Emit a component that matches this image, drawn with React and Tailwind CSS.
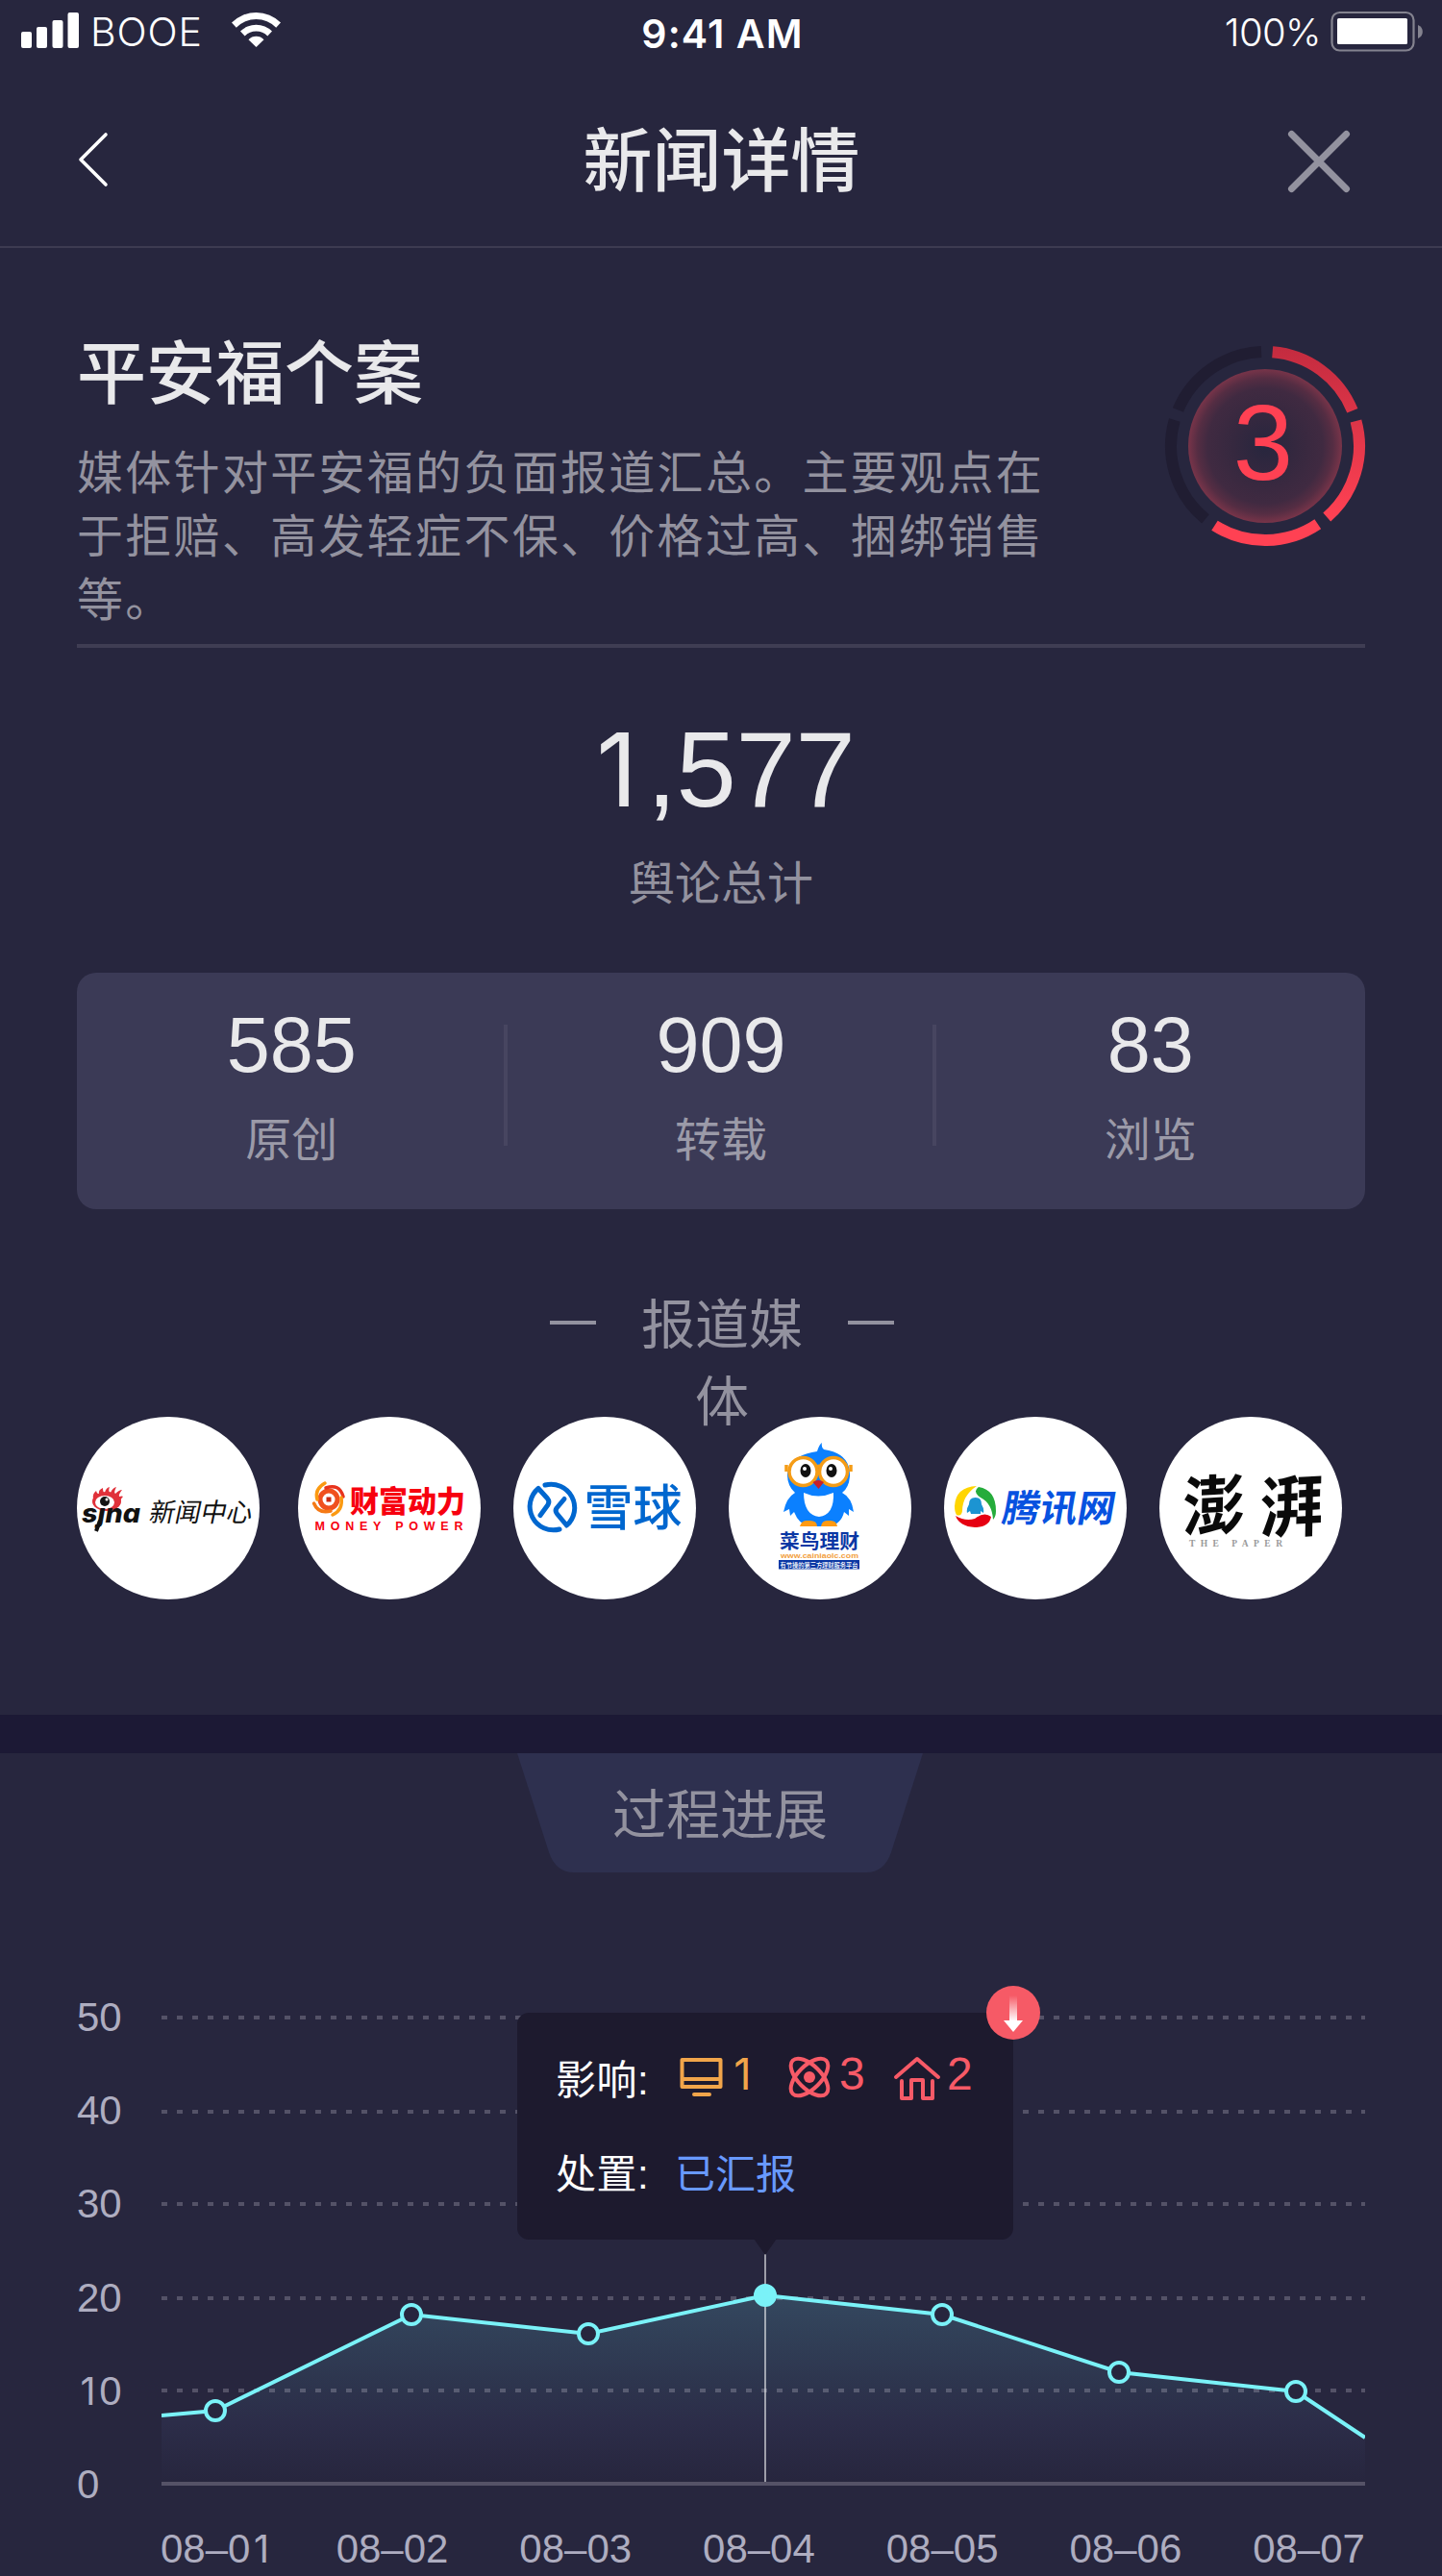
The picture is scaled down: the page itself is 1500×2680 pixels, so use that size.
import React from "react";

const SANS = "font-['Liberation_Sans','Noto_Sans_CJK_SC',sans-serif]";

// Sets "1" in a face without a foot serif, keeping the tabular digit width.
function Digits({ value }) {
  return [...value].map((c, i) =>
    c === "1" ? (
      <span key={i} className="inline-block w-[0.59em] text-center font-['Inter',sans-serif] text-[0.94em] leading-none">
        1
      </span>
    ) : (
      c
    )
  );
}

function StatusBar() {
  return (
    <div className="flex h-[66px] w-full items-start justify-between pl-[22px] pr-[19px] font-['Inter',sans-serif] text-white">
      <div className="flex w-[500px] items-start">
        <svg className="mt-[13px] h-[37px] w-[60px]" viewBox="0 0 60 37" fill="#fff">
          <rect x="0" y="20" width="11" height="17" rx="2" />
          <rect x="16" y="15" width="11" height="22" rx="2" />
          <rect x="32.5" y="8" width="11" height="29" rx="2" />
          <rect x="48.5" y="0" width="11.5" height="37" rx="2" />
        </svg>
        <span className="ml-3 mt-[9px] w-[118px] whitespace-nowrap text-[41px] font-light leading-[48px] tracking-[0.9px]">BOOE</span>
        <svg className="ml-[29px] mt-[13px] h-[36px] w-[51px]" viewBox="0 0 51 36" fill="#fff">
          <path d="M0 10.600 A36 36 0 0 1 51 10.600 L46.200 15.800 A29 29 0 0 0 4.800 15.800 Z" />
          <path d="M9 19.500 A23.300 23.300 0 0 1 42 19.500 L37.300 24.500 A16.500 16.500 0 0 0 13.700 24.500 Z" />
          <path d="M17.500 28.300 A11 11 0 0 1 33.500 28.300 L25.500 36 Z" />
        </svg>
      </div>
      <span className="mt-[11px] whitespace-nowrap text-[41px] font-semibold leading-[48px] tracking-[1.100px]">9:41 AM</span>
      <div className="flex w-[500px] items-start justify-end">
        <span className="mt-[10px] whitespace-nowrap text-[40px] font-light leading-[48px] tracking-[-0.6px]">100%</span>
        <svg className="ml-[10px] mt-[11px] h-[43px] w-[97px]" viewBox="0 0 97 43">
          <rect x="1.500" y="2" width="85" height="39.500" rx="8" fill="none" stroke="#84838f" strokeWidth="2.200" />
          <rect x="7" y="8" width="73" height="27" rx="1.500" fill="#fff" />
          <path d="M91 15 A7.500 7.500 0 0 1 91 29 Z" fill="#84838f" />
        </svg>
      </div>
    </div>
  );
}

function Header() {
  return (
    <div className="flex h-[192px] items-center justify-between border-b-2 border-[#3d3b51] pl-[80px] pr-[94px]">
      <svg className="mt-[10px] h-[60px] w-[36px]" viewBox="0 0 36 60" fill="none" stroke="#fff" strokeWidth="3.600" strokeLinecap="round" strokeLinejoin="round">
        <path d="M30 4 L4 30 L30 56" />
      </svg>
      <h1 className="ml-[47px] mt-[14px] text-[72px] font-medium leading-[84px] text-[#e9e9eb]">新闻详情</h1>
      <svg className="mt-[14px] h-[68px] w-[68px]" viewBox="0 0 68 68" fill="none" stroke="#93929f" strokeWidth="7" strokeLinecap="round">
        <path d="M5.500 5.500 L62.500 62.500 M62.500 5.500 L5.500 62.500" />
      </svg>
    </div>
  );
}

const SEGMENTS = [
  [4.5, 68, true],
  [74.6, 139, true],
  [146, 212.4, true],
  [219.3, 286, false],
  [292.5, 357.7, false],
];

function arc(from, to) {
  const at = (d) => {
    const a = ((d - 90) * Math.PI) / 180;
    return `${(105 + 98 * Math.cos(a)).toFixed(2)} ${(105 + 98 * Math.sin(a)).toFixed(2)}`;
  };
  return `M${at(from)} A98 98 0 0 1 ${at(to)}`;
}

function LevelRing() {
  return (
    <div className="relative h-[210px] w-[210px]">
      <svg className="block h-[210px] w-[210px]" viewBox="0 0 210 210" fill="none">
        <defs>
          <linearGradient id="ring" gradientUnits="userSpaceOnUse" x1="0" y1="0" x2="0" y2="180">
            <stop offset="0" stopColor="#c32b3f" />
            <stop offset="1" stopColor="#ff4153" />
          </linearGradient>
          <radialGradient id="core">
            <stop offset="0" stopColor="#27263e" />
            <stop offset="0.400" stopColor="#35283f" />
            <stop offset="0.750" stopColor="#402a41" />
            <stop offset="0.880" stopColor="#552d43" />
            <stop offset="1" stopColor="#783449" />
          </radialGradient>
        </defs>
        {SEGMENTS.map(([a, b, on]) => (
          <path key={a} d={arc(a, b)} stroke={on ? "url(#ring)" : "#201d32"} strokeWidth="12" />
        ))}
        <circle cx="105" cy="105" r="80" fill="url(#core)" />
      </svg>
      <span className="absolute inset-x-0 top-[38px] pr-1 text-center text-[112px] leading-[128px] text-[#ff4153]">3</span>
    </div>
  );
}

function Summary() {
  return (
    <section className="mx-[80px] flex h-[416px] items-start justify-between border-b-4 border-[#3f3d53]">
      <div className="w-[1020px]">
        <h2 className="mt-[89px] text-[72px] font-medium leading-[84px] text-[#e9e9eb]">平安福个案</h2>
        <p className="mt-[29px] text-[48px] leading-[66px] tracking-[2.300px] text-[#93929f]">
          媒体针对平安福的负面报道汇总。主要观点在
          <br />
          于拒赔、高发轻症不保、价格过高、捆绑销售
          <br />
          等。
        </p>
      </div>
      <div className="-mr-[1px] mt-[101px]">
        <LevelRing />
      </div>
    </section>
  );
}

function Totals() {
  const items = [
    ["585", "原创"],
    ["909", "转载"],
    ["83", "浏览"],
  ];
  return (
    <section className="flex flex-col items-center">
      <div className="mt-[63px] h-[128px] text-[112px] leading-[128px] tracking-[-0.3px] text-[#e9e9eb]">
        <Digits value="1,577" />
      </div>
      <div className="mt-[23px] text-[48px] leading-[64px] text-[#93929f]">舆论总计</div>
      <div className="mt-[60px] flex h-[246px] w-[1340px] items-start rounded-[20px] bg-[#3b3a56]">
        {items.map(([n, label], i) => (
          <React.Fragment key={n}>
            {i > 0 && <div className="-ml-[3px] -mr-px mt-[54px] h-[126px] w-1 bg-[#474560]" />}
            <div className="flex h-full flex-1 flex-col items-center">
              <div className="mt-[29px] text-[81px] leading-[92px] text-[#e9e9eb]">{n}</div>
              <div className="mt-[22px] text-[48px] leading-[64px] text-[#9b9aa8]">{label}</div>
            </div>
          </React.Fragment>
        ))}
      </div>
    </section>
  );
}

const CJK = "'Noto Sans CJK SC', sans-serif";

function Sina() {
  return (
    <g>
      <g fill="#e0313a">
        <ellipse cx="31" cy="88" rx="15" ry="10" />
        <path d="M17 85 Q16 80 20 77 Q21 81 23 80 Q22 76 27 74 Q27 79 29 79 Q30 74 34 73 Q32 78 35 79 Q37 74 41 73 Q38 79 40 80 Q44 76 47 76 Q43 81 44 83 Q47 82 48 83 Q44 87 45 91Z" />
      </g>
      <ellipse cx="29" cy="89" rx="10" ry="7" fill="#fff" />
      <circle cx="29" cy="88" r="5" fill="#141414" />
      <circle cx="31" cy="86" r="1.500" fill="#fff" />
      <text x="5" y="110" fontFamily="'Inter', sans-serif" fontStyle="italic" fontWeight="800" fontSize="27" textLength="61" lengthAdjust="spacingAndGlyphs" fill="#111">sȷna</text>
      <path d="M24 108 L20 119" stroke="#111" strokeWidth="4" />
      <text transform="translate(74 108.500) skewX(-12)" fontFamily={CJK} fontSize="27" textLength="107" lengthAdjust="spacingAndGlyphs" fill="#111">新闻中心</text>
    </g>
  );
}

function MoneyPower() {
  return (
    <g>
      <g fill="none" strokeLinecap="round">
        <circle cx="32" cy="86" r="9" stroke="#f0501e" strokeWidth="5" />
        <path d="M20 86 Q17 75 28 69" stroke="#fb9a12" strokeWidth="3.500" />
        <path d="M29 74 Q43 69 47 83" stroke="#e8331d" strokeWidth="3.500" />
        <path d="M45 84 Q47 97 36 102" stroke="#fb9a12" strokeWidth="3.500" />
        <path d="M34 98 Q21 101 16.500 90" stroke="#f57a16" strokeWidth="3.500" />
      </g>
      <rect x="29.500" y="83.500" width="5" height="5" fill="#c92a14" />
      <text x="54" y="99" fontFamily={CJK} fontWeight="900" fontSize="31" textLength="120" lengthAdjust="spacingAndGlyphs" fill="#f7000f">财富动力</text>
      <text x="17.500" y="118" fontFamily="'Liberation Sans', sans-serif" fontWeight="700" fontSize="12.500" textLength="154" fill="#f7000f">MONEY POWER</text>
    </g>
  );
}

function Snowball() {
  return (
    <g>
      <g fill="none" stroke="#0067cf" strokeWidth="5" strokeLinecap="round" strokeLinejoin="round">
        <path d="M33 71 A24.500 24.500 0 0 1 55.500 113 L45.500 101 Q43 98 45 95 L53 85.500" />
        <path d="M48 117 A24.500 24.500 0 0 1 26 74.500 L35.500 85 Q38 88 36 91.500 L28 102.500" />
      </g>
      <text x="73.500" y="113" fontFamily={CJK} fontWeight="500" fontSize="51" textLength="102" lengthAdjust="spacingAndGlyphs" fill="#0067cf">雪球</text>
    </g>
  );
}

function Cainiao() {
  return (
    <g>
      <path d="M92 36 Q94 29 97 27 Q96 32 99 34 Q127 38 126 62 Q125 74 118 79 Q128 84 130 99 L125 96 L125 103 L120 99 Q117 112 104 114 L84 114 Q73 112 68 99 L64 103 L63 96 L57 99 Q60 84 69 79 Q61 72 61 60 Q63 40 92 36Z" fill="#0b80ff" />
      <path d="M78 79 Q93 86 109 79 Q110 102 94 104 Q78 102 78 79Z" fill="#fff" />
      <g fill="#fff" stroke="#f59c16" strokeWidth="3.500">
        <circle cx="77.500" cy="57" r="14.500" />
        <circle cx="109" cy="57" r="14.500" />
      </g>
      <path d="M91 52.500 Q93.500 50 96 52.500 M60 50 v7 M127 50 v7" stroke="#f59c16" strokeWidth="3.500" fill="none" />
      <ellipse cx="80" cy="56" rx="5.500" ry="7" fill="#111" />
      <ellipse cx="107" cy="56" rx="5.500" ry="7" fill="#111" />
      <circle cx="79" cy="54" r="2" fill="#fff" />
      <circle cx="106" cy="54" r="2" fill="#fff" />
      <path d="M87.500 68 Q93 64 99 68 L93.500 75Z" fill="#c8202a" />
      <path d="M74 114 Q76 107 82 108 Q92 107 92 114Z M96 114 Q97 107 104 108 Q112 107 113 114Z" fill="#ff9a12" />
      <text x="53" y="137" fontFamily={CJK} fontWeight="700" fontSize="20" textLength="83" lengthAdjust="spacingAndGlyphs" fill="#0a37a4">菜鸟理财</text>
      <text x="54" y="146.500" fontFamily="'Liberation Sans', sans-serif" fontWeight="700" fontSize="8" textLength="81" lengthAdjust="spacingAndGlyphs" fill="#f2a040">www.cainiaolc.com</text>
      <rect x="52" y="149" width="84" height="9.500" fill="#0a37a4" />
      <text x="53.500" y="156.500" fontFamily={CJK} fontWeight="500" fontSize="7" textLength="81" lengthAdjust="spacingAndGlyphs" fill="#fff">有节操的第三方理财服务平台</text>
    </g>
  );
}

function Tencent() {
  return (
    <g>
      <path d="M34 72 Q12 73 11 93 Q11 99 13 102 Q18 104 19 98 Q19 82 34 72Z" fill="#ffd500" />
      <path d="M36 73 Q54 76 54 98 Q54 104 51 107 Q50 90 38 84 Q29 78 36 73Z" fill="#25ac3b" />
      <path d="M12 103 Q22 109 32 106 Q42 98 49 104 Q47 115 32 115 Q16 114 12 103Z" fill="#e60012" />
      <path d="M26 91 Q26 84 32.500 84 Q39 84 39 91 Q42 96 41 100 L38 98 L38 101 H28 L27 98 L24 100 Q23 96 26 91Z" fill="#1c94d2" />
      <text transform="translate(59 109) skewX(-10)" fontFamily={CJK} fontWeight="700" fontSize="39" textLength="117" lengthAdjust="spacingAndGlyphs" fill="#0752e0">腾讯网</text>
    </g>
  );
}

function Paper() {
  return (
    <g>
      <text transform="translate(24 119) rotate(-3) skewX(-4)" fontFamily={CJK} fontWeight="700" fontSize="68" textLength="65" lengthAdjust="spacingAndGlyphs" fill="#0a0a0a">澎</text>
      <text transform="translate(104 121) rotate(-3) skewX(-4)" fontFamily={CJK} fontWeight="700" fontSize="70" textLength="66" lengthAdjust="spacingAndGlyphs" fill="#0a0a0a">湃</text>
      <text x="31" y="135" fontFamily="'Liberation Serif', serif" fontWeight="700" fontSize="9.500" textLength="97" fill="#9a9a9a">THE PAPER</text>
    </g>
  );
}

function Media() {
  const logos = [Sina, MoneyPower, Snowball, Cainiao, Tencent, Paper];
  return (
    <section className="flex h-[526px] flex-col px-[80px] pt-[80px] text-[#93929f]">
      <div className="flex h-[136px] justify-center pl-px pt-px">
        <div className="mt-[35px] h-1 w-12 bg-[#93929f]" />
        <h3 className="ml-[40px] mr-[39px] w-[183px] text-center text-[56px] leading-[80px]">报道媒体</h3>
        <div className="mt-[35px] h-1 w-12 bg-[#93929f]" />
      </div>
      <div className="flex gap-[34px]">
        {logos.map((Logo, i) => (
          <div key={i} className="h-[190px] w-[190px] overflow-hidden rounded-full bg-white first:mr-[6px]">
            <svg className="h-[190px] w-[190px]" viewBox="0 0 190 190">
              <Logo />
            </svg>
          </div>
        ))}
      </div>
    </section>
  );
}

const POINTS = [
  [224, 2508],
  [428, 2408],
  [612, 2428],
  [796, 2388],
  [980, 2408],
  [1164, 2468],
  [1348, 2488],
];
const GRID = [2099, 2197, 2293, 2391, 2487];
const LINE = `168,2513 ${POINTS.map((p) => p.join(",")).join(" ")} 1420,2536`;

function Plot() {
  return (
    <svg className="block h-[520px] w-[1260px]" viewBox="166 2080 1260 520" fill="none">
      <defs>
        <linearGradient id="area" gradientUnits="userSpaceOnUse" x1="0" y1="2388" x2="0" y2="2582">
          <stop offset="0" stopColor="#34485f" />
          <stop offset="0.500" stopColor="#2d344d" />
          <stop offset="0.680" stopColor="#2c2d49" />
          <stop offset="1" stopColor="#27263e" />
        </linearGradient>
        <clipPath id="plot">
          <rect x="168" y="2080" width="1252" height="520" />
        </clipPath>
      </defs>
      <polygon points={`168,2583 ${LINE} 1420,2583`} fill="url(#area)" />
      {GRID.map((y) => (
        <path key={y} d={`M168 ${y} H1420`} stroke="#cfcbd6" strokeOpacity="0.270" strokeWidth="4" strokeDasharray="6 10" />
      ))}
      <path d="M168 2584 H1420" stroke="#555267" strokeWidth="4" />
      <polyline points={LINE} stroke="#7af2f8" strokeWidth="4" clipPath="url(#plot)" />
      <path d="M796 2345 V2582" stroke="#fff" strokeOpacity="0.550" strokeWidth="2" />
      {POINTS.map(([x, y]) => (
        <circle key={x} cx={x} cy={y} r="10" stroke="#7af2f8" strokeWidth="4" fill={x === 796 ? "#7af2f8" : "#27263e"} />
      ))}
    </svg>
  );
}

function Tooltip() {
  return (
    <div className="absolute left-[538px] top-[270px] h-[236px] w-[516px] rounded-xl bg-[#1d1a2e] pl-[40px] pt-[36px]">
      <div className="flex h-[66px] items-center">
        <span className="mt-[3px] w-[129px] text-[42px] leading-[64px] tracking-[0.500px] text-white">影响:</span>
        <svg className="mb-1 h-[42px] w-[45px]" viewBox="0 0 45 42" fill="none" stroke="#f1a54a" strokeWidth="4" strokeLinejoin="round" strokeLinecap="round">
          <path d="M2.500 3 H42.500 V31 H2.500Z M2.500 23 H42.500 M15 39 H31" />
        </svg>
        <span className="mb-[10px] ml-[7px] w-[61px] text-[48px] leading-[56px] text-[#f1a54a]">
          <Digits value="1" />
        </span>
        <svg className="mb-1 h-[44px] w-[44px]" viewBox="-22 -22 44 44" fill="none" stroke="#f75a67" strokeWidth="4">
          <ellipse rx="24.500" ry="12" transform="rotate(45)" />
          <ellipse rx="24.500" ry="12" transform="rotate(-45)" />
          <circle r="6" fill="#f75a67" stroke="none" />
        </svg>
        <span className="mb-[10px] ml-[9px] w-[56px] text-[48px] leading-[56px] text-[#f75a67]">3</span>
        <svg className="mb-[2px] h-[46px] w-[50px]" viewBox="0 0 50 46" fill="none" stroke="#f75a67" strokeWidth="4" strokeLinecap="round" strokeLinejoin="round">
          <path d="M3 22 L25 3 L47 22 M9 26 V44 H19 V25 H31 V44 H41 V26" />
        </svg>
        <span className="mb-[10px] ml-[6px] text-[48px] leading-[56px] text-[#f75a67]">2</span>
      </div>
      <div className="mt-[34px] flex h-[66px] items-center text-[42px] leading-[64px]">
        <span className="w-[124px] tracking-[0.500px] text-white">处置:</span>
        <span className="text-[#6899ff]">已汇报</span>
      </div>
      <svg className="absolute left-[246px] top-[235px] h-[17px] w-[24px]" viewBox="0 0 24 17">
        <path d="M0 0 H24 L12 17Z" fill="#1d1a2e" />
      </svg>
      <svg className="absolute -right-[28px] -top-[28px] h-[56px] w-[56px]" viewBox="0 0 56 56">
        <defs>
          <linearGradient id="stem" x1="0" y1="0" x2="0" y2="1">
            <stop offset="0" stopColor="#fff" stopOpacity="0" />
            <stop offset="1" stopColor="#fff" />
          </linearGradient>
        </defs>
        <circle cx="28" cy="28" r="28" fill="#f65a66" />
        <rect x="24" y="10" width="8" height="27" fill="url(#stem)" />
        <path d="M18 36 H38 L28 48Z" fill="#fff" />
      </svg>
    </div>
  );
}

function Progress() {
  const days = ["08–01", "08–02", "08–03", "08–04", "08–05", "08–06", "08–07"];
  return (
    <section className="relative h-[856px]">
      <div className="relative mx-auto flex h-[124px] w-[422px] -translate-x-px items-start justify-center">
        <svg className="absolute inset-0 h-[124px] w-[422px]" viewBox="0 0 422 124">
          <path d="M0 0 H422 L389 103 Q382 124 363 124 H59 Q40 124 33 103Z" fill="#2e304f" />
        </svg>
        <h3 className="relative mt-[25px] text-[56px] leading-[80px] text-[#93929f]">过程进展</h3>
      </div>
      <div className="flex pl-[80px] pt-[132px] text-[42px] leading-[48px] text-[#aeadc0]">
        <div className="-mt-[5px] flex h-[534px] w-[86px] flex-col justify-between">
          {["50", "40", "30", "20", "10", "0"].map((v) => (
            <span key={v} className="h-[48px]">
              <Digits value={v} />
            </span>
          ))}
        </div>
        <Plot />
      </div>
      <div className="ml-[167px] mt-[19px] flex w-[1253px] justify-between text-[42px] leading-[48px] text-[#aeadc0]">
        {days.map((d) => (
          <span key={d} className="h-[48px] first:mr-[-8px]">
            <Digits value={d} />
          </span>
        ))}
      </div>
      <Tooltip />
    </section>
  );
}

export default function App() {
  return (
    <main className={`h-[2680px] w-[1500px] overflow-hidden bg-[#27263e] ${SANS}`}>
      <StatusBar />
      <Header />
      <Summary />
      <Totals />
      <Media />
      <div className="h-[40px] bg-[#1c1935]" />
      <Progress />
    </main>
  );
}
